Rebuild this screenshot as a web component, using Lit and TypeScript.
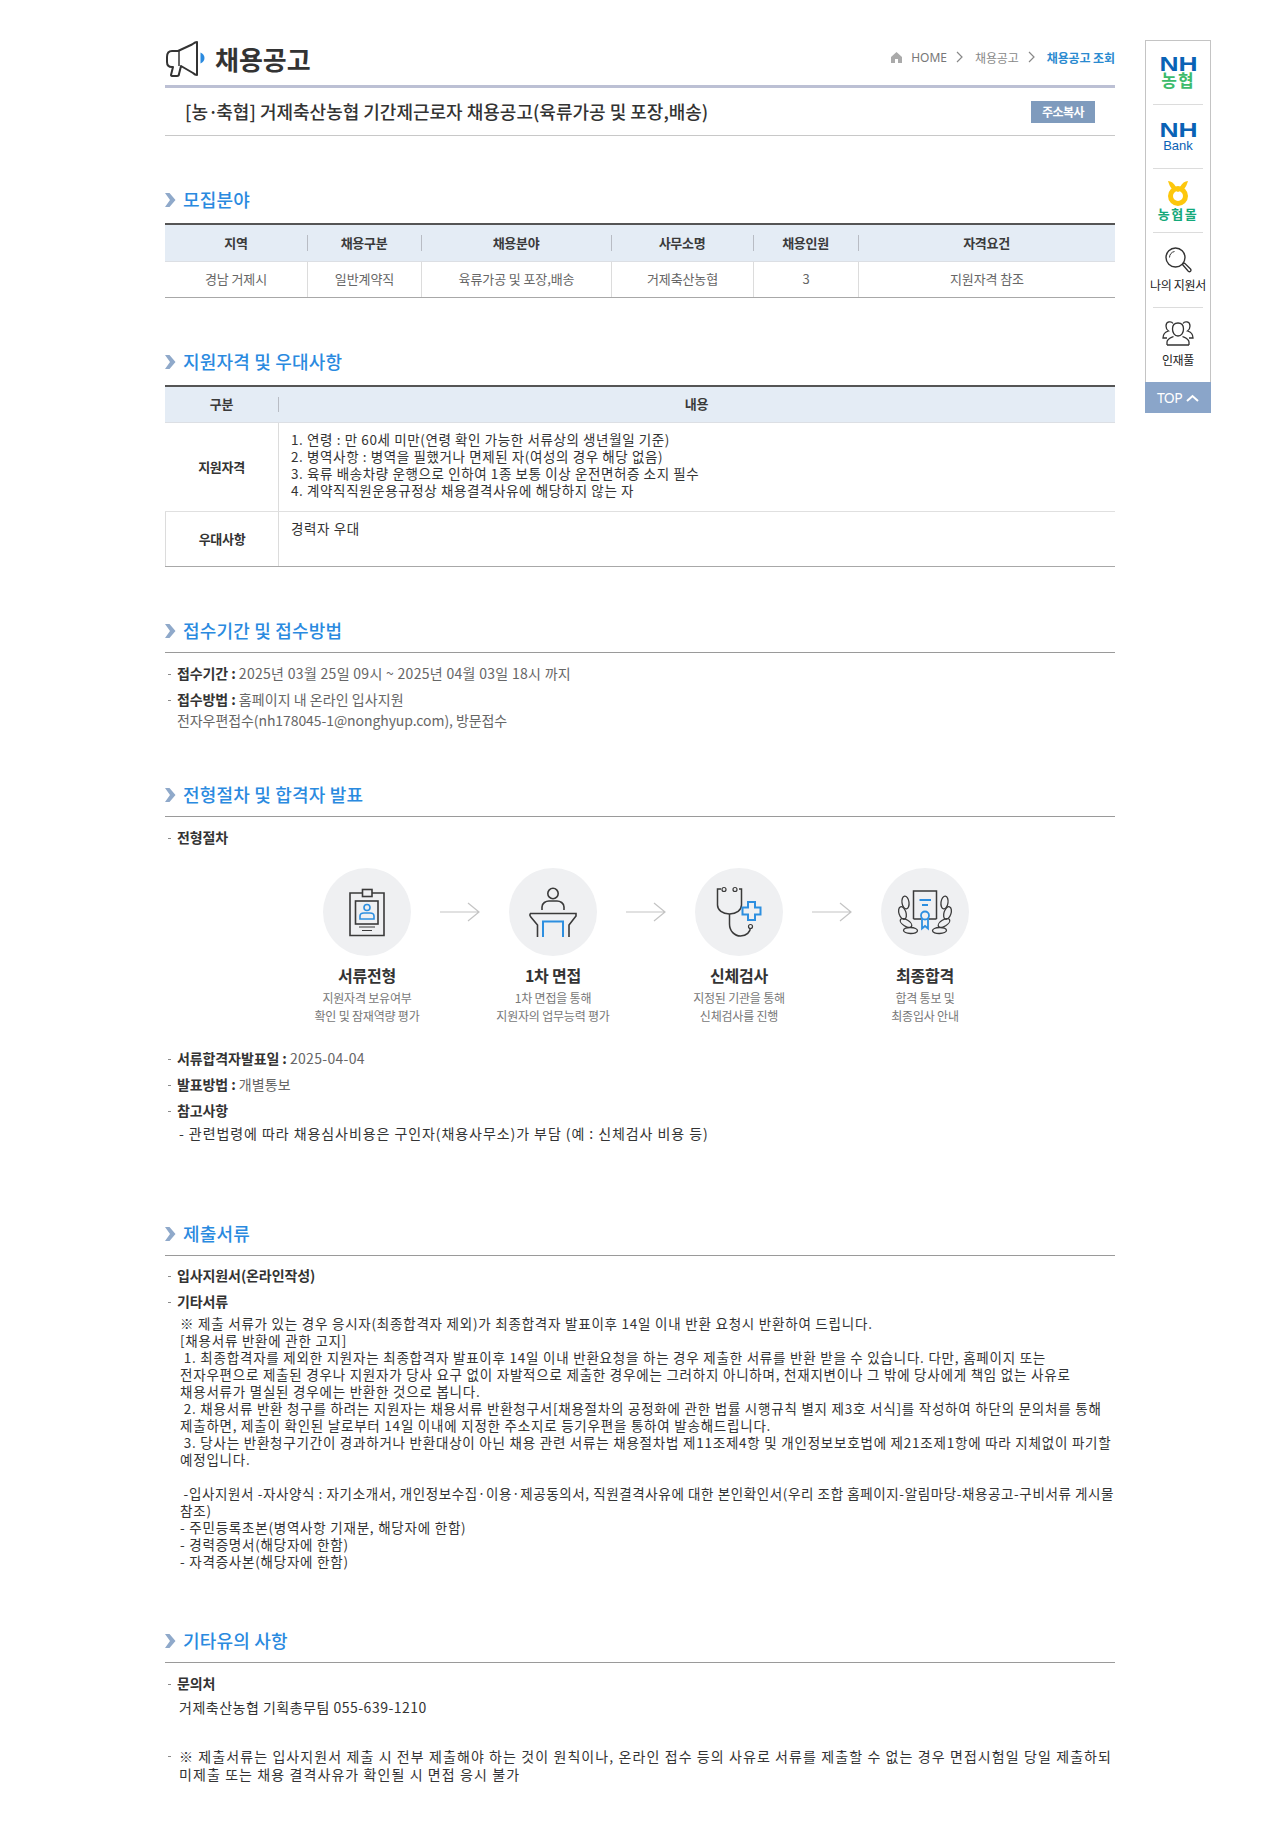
import { LitElement, html, css, svg } from "lit";
import { customElement } from "lit/decorators.js";

const chevron = html`<svg class="chev" width="11" height="14" viewBox="0 0 11 14"><polygon points="0,0 4.5,0 10.5,7 4.5,14 0,14 5,7" fill="#8fa9ca"/></svg>`;
const crumbChev = html`<svg class="cc" width="7" height="12" viewBox="0 0 7 12"><path d="M1 1l5 5-5 5" fill="none" stroke="#888" stroke-width="1.2"/></svg>`;
const D = "#3a3a3a";
const B = "#2d8fe0";

const icon1 = svg`
  <path d="M39 25H27v42.5h34V25H49" fill="none" stroke="${D}" stroke-width="1.6"/>
  <rect x="39.5" y="21.5" width="9.5" height="7" fill="none" stroke="${D}" stroke-width="1.6"/>
  <rect x="32.5" y="33" width="22.5" height="23" fill="none" stroke="${D}" stroke-width="1.6"/>
  <circle cx="44" cy="39.5" r="3" fill="none" stroke="${B}" stroke-width="1.6"/>
  <path d="M37 51v-3c0-2 2-3 4-3h6c2 0 4 1 4 3v3z" fill="none" stroke="${B}" stroke-width="1.6"/>
  <path d="M36 59h16M39 62.5h10" stroke="${D}" stroke-width="1.2"/>`;
const icon2 = svg`
  <circle cx="44" cy="25.5" r="5.2" fill="none" stroke="${D}" stroke-width="1.6"/>
  <path d="M33 42v-3c0-4 4-6 7-6h8c3 0 7 2 7 6v3" fill="none" stroke="${D}" stroke-width="1.6"/>
  <path d="M21 45.5h46v2.5L60 57v12M21 48l7.5 9v12M21 45.5v2.5M67 45.5v2.5" fill="none" stroke="${D}" stroke-width="1.6"/>
  <path d="M34 69V53.5h20V69" fill="none" stroke="${B}" stroke-width="2"/>`;
const icon3 = svg`
  <path d="M26 21h-3.500v16c0 5 5 9 12 9s12-4 12-9V21H44" fill="none" stroke="${D}" stroke-width="1.5"/>
  <circle cx="29" cy="21.500" r="2" fill="none" stroke="${D}" stroke-width="1.2"/>
  <circle cx="40" cy="21.500" r="2" fill="none" stroke="${D}" stroke-width="1.2"/>
  <path d="M34.500 46v10c0 7 5 12 11 12s10-4 10-9" fill="none" stroke="${D}" stroke-width="1.5"/>
  <circle cx="55.500" cy="58.500" r="2" fill="#eff0f2" stroke="${D}" stroke-width="1.2"/>
  <path d="M53 34h7v5.500h5.500v7H60V52h-7v-5.500h-5.500v-7H53z" fill="#eff0f2" stroke="${B}" stroke-width="2"/>`;
const leaves = svg`
  <ellipse cx="0" cy="0" rx="3.500" ry="6.500" fill="none" stroke="${D}" stroke-width="1.300" transform="translate(24.500 34.500) rotate(-8)"/>
  <ellipse cx="0" cy="0" rx="3.500" ry="6.500" fill="none" stroke="${D}" stroke-width="1.300" transform="translate(21.500 45) rotate(-18)"/>
  <ellipse cx="0" cy="0" rx="3.200" ry="6.500" fill="none" stroke="${D}" stroke-width="1.300" transform="translate(25 55) rotate(-58)"/>
  <ellipse cx="0" cy="0" rx="3" ry="7" fill="none" stroke="${D}" stroke-width="1.300" transform="translate(29.500 62.500) rotate(-88)"/>`;
const icon4 = svg`
  <path d="M32.500 51V23h23v28" fill="none" stroke="${D}" stroke-width="1.500"/><path d="M32.500 51H40M48 51h7.500" stroke="${D}" stroke-width="1.500"/>
  <path d="M38.500 32h11.500M41 37h6" stroke="${B}" stroke-width="1.800"/>
  <path d="M41 50v10.500l3-2.500 3 2.500V50" fill="#eff0f2" stroke="${B}" stroke-width="1.800"/>
  <circle cx="44" cy="47.500" r="4" fill="#eff0f2" stroke="${B}" stroke-width="1.800"/>
  ${leaves}<g transform="translate(88 0) scale(-1 1)">${leaves}</g>`;

const steps = [
  { icon: icon1, t: "서류전형", d: ["지원자격 보유여부", "확인 및 잠재역량 평가"] },
  { icon: icon2, t: "1차 면접", d: ["1차 면접을 통해", "지원자의 업무능력 평가"] },
  { icon: icon3, t: "신체검사", d: ["지정된 기관을 통해", "신체검사를 진행"] },
  { icon: icon4, t: "최종합격", d: ["합격 통보 및", "최종입사 안내"] },
];

const notice = [
  "※ 제출 서류가 있는 경우 응시자(최종합격자 제외)가 최종합격자 발표이후 14일 이내 반환 요청시 반환하여 드립니다.",
  "[채용서류 반환에 관한 고지]",
  " 1. 최종합격자를 제외한 지원자는 최종합격자 발표이후 14일 이내 반환요청을 하는 경우 제출한 서류를 반환 받을 수 있습니다. 다만, 홈페이지 또는",
  "전자우편으로 제출된 경우나 지원자가 당사 요구 없이 자발적으로 제출한 경우에는 그러하지 아니하며, 천재지변이나 그 밖에 당사에게 책임 없는 사유로",
  "채용서류가 멸실된 경우에는 반환한 것으로 봅니다.",
  " 2. 채용서류 반환 청구를 하려는 지원자는 채용서류 반환청구서[채용절차의 공정화에 관한 법률 시행규칙 별지 제3호 서식]를 작성하여 하단의 문의처를 통해",
  "제출하면, 제출이 확인된 날로부터 14일 이내에 지정한 주소지로 등기우편을 통하여 발송해드립니다.",
  " 3. 당사는 반환청구기간이 경과하거나 반환대상이 아닌 채용 관련 서류는 채용절차법 제11조제4항 및 개인정보보호법에 제21조제1항에 따라 지체없이 파기할",
  "예정입니다.",
  " ",
  " -입사지원서 -자사양식 : 자기소개서, 개인정보수집·이용·제공동의서, 직원결격사유에 대한 본인확인서(우리 조합 홈페이지-알림마당-채용공고-구비서류 게시물",
  "참조)",
  "- 주민등록초본(병역사항 기재분, 해당자에 한함)",
  "- 경력증명서(해당자에 한함)",
  "- 자격증사본(해당자에 한함)",
];

@customElement("app-root")
export class AppRoot extends LitElement {
  static styles = css`
    :host { display: block; height: 1832px; background: #fff; color: #333;
      font-family: "Noto Sans CJK KR", "Noto Sans", sans-serif; font-size: 13px; }
    * { box-sizing: border-box; }
    .page { width: 950px; margin-left: 165px; position: relative; }
    .top { height: 88px; border-bottom: 3px solid #bcc0d4; display: flex; justify-content: space-between; align-items: flex-start; }
    .brand { display: flex; align-items: center; gap: 10px; margin: 41px 0 0 1px; height: 36px; }
    .brand h1 { margin: 0; font-size: 26px; font-weight: 700; color: #333; letter-spacing: 0; line-height: 36px; }
    .crumb { display: flex; align-items: center; margin-top: 47px; height: 20px; font-size: 12px; color: #888; letter-spacing: -0.1px; }
    .crumb .home { margin-right: 9px; }
    .crumb .h { font-family: "Noto Sans", sans-serif; letter-spacing: 0; margin-right: 9px; color: #777; }
    .crumb .cc { margin-right: 12px; }
    .crumb .m { margin-right: 9px; }
    .crumb b { color: #2a8ad0; font-weight: 700; }
    .title { height: 48px; border-bottom: 1px solid #c8c8c8; display: flex; align-items: center; justify-content: space-between; padding: 0 20px 0 20px; }
    .title h2 { margin: 0; padding-bottom: 2px; font-size: 18px; font-weight: 500; letter-spacing: 0; color: #333; }
    .title .dot { letter-spacing: -2px; }
    .copy { width: 64px; height: 22px; background: #7f9bbd; color: #fff; font-size: 12px; font-weight: 700; display: flex; align-items: center; justify-content: center; letter-spacing: -0.5px; }
    section { margin-top: 52px; }
    .head { display: flex; align-items: center; gap: 7px; height: 24px; }
    .head h3 { margin: 0; padding-bottom: 2px; font-size: 18px; font-weight: 500; color: #2a8adf; letter-spacing: 0.2px; line-height: 24px; }
    .ruled { padding-bottom: 9px; height: 34px; border-bottom: 1px solid #9a9a9a; }
    .tbl { display: grid; margin-top: 11px; border-top: 2px solid #555; border-bottom: 1px solid #a8a8a8; }
    .t1 { grid-template-columns: 142px 114px 190px 142px 105px 257px; grid-template-rows: 37px 35px; }
    .t2 { grid-template-columns: 113px 837px; grid-template-rows: 36px 89px 54px; }
    .th { background: #e4ecf5; border-bottom: 1px solid #dcdfe4; padding-bottom: 2px; font-weight: 700; font-size: 13px; color: #3a3a3a; display: flex; align-items: center; justify-content: center; letter-spacing: -0.3px; position: relative; }
    .th + .th::before { content: ""; position: absolute; left: 0; top: 10px; bottom: 10px; width: 1px; background: #b8bcc4; }
    .td { display: flex; align-items: center; justify-content: center; padding-bottom: 2px; color: #666; font-size: 13px; letter-spacing: -0.1px; }
    .td + .td { border-left: 1px solid #dcdcdc; }
    .t2 .td { color: #333; }
    .rowh { font-weight: 700; letter-spacing: -0.3px; }
    .td.cell { justify-content: flex-start; align-items: flex-start; font-size: 13.500px; line-height: 17px; padding: 8px 0 0 12px; letter-spacing: 0.6px; }
    .line { border-bottom: 1px solid #e0e0e0; }
    .list { padding-top: 10px; }
    .s5 .list { padding-top: 9px; }
    .item { line-height: 21px; margin-bottom: 5px; padding-left: 12px; font-size: 14px; color: #666; letter-spacing: 0.05px;
      background: linear-gradient(#8a8a8a, #8a8a8a) no-repeat 3px 11px / 3px 1px; }
    .item b { color: #333; font-weight: 700; letter-spacing: -0.1px; }
    .num { letter-spacing: 0.3px; }
    .mail { letter-spacing: -0.08px; }
    .sub { color: #333; font-size: 14px; letter-spacing: 0.93px; margin: -3px 0 0 14px; line-height: 21px; white-space: pre; }
    .flow { display: flex; align-items: flex-start; margin: 20px 0 0 142px; }
    .step { width: 120px; display: flex; flex-direction: column; align-items: center; white-space: nowrap; }
    .circle { width: 88px; height: 88px; border-radius: 50%; background: #eff0f2; }
    .step svg { display: block; }
    .step strong { margin: 8px 0 3px; font-size: 16px; line-height: 22px; font-weight: 700; color: #333; letter-spacing: -0.2px; }
    .step span { font-size: 12px; line-height: 18px; color: #777; letter-spacing: -0.2px; }
    .arrow { margin: 34px 13px 0; flex: none; }
    .after { margin-top: 23px; }
    .notice { margin: -2px 0 0 15px; line-height: 17px; font-size: 13.500px; color: #333; letter-spacing: 0.77px; white-space: pre; }
    .notice div { min-height: 17px; }
    .notice .tight { letter-spacing: 0.6px; }
    .s5 { margin-top: 78px; }
    .s6 { margin-top: 59px; }
    .contact { margin: -3px 0 0 14px; font-size: 14px; line-height: 22px; color: #333; letter-spacing: 0.5px; }
    .warn { margin-top: 29px; padding-left: 14px; font-size: 14px; line-height: 18px; color: #333; letter-spacing: 1.09px; white-space: pre;
      background: linear-gradient(#8a8a8a, #8a8a8a) no-repeat 3px 9px / 3px 1px; }

    .quick { position: absolute; left: 980px; top: 40px; width: 66px; height: 373px; border: 1px solid #c4c4c4; border-bottom: 0; background: #fff; display: flex; flex-direction: column; align-items: center; }
    .q { width: 50px; display: flex; flex-direction: column; align-items: center; border-bottom: 1px solid #dcdcdc; flex: none; }
    .q.last { border-bottom: 0; }
    .nh { font-family: "Liberation Sans", sans-serif; font-weight: 700; color: #0a62b5; font-size: 20px; line-height: 15px; height: 15px; transform: scaleX(1.32); }
    .q1 { height: 64px; padding-top: 16px; }
    .q2 { height: 64px; padding-top: 18px; }
    .q3 { height: 64px; padding-top: 12px; }
    .q4 { height: 75px; padding-top: 13px; }
    .q5 { height: 74px; padding-top: 12px; }
    .q5 .lbl { margin-top: 5px; }
    .ko1 { font-size: 17px; line-height: 15px; font-weight: 700; color: #3dbb6c; margin-top: 0; letter-spacing: 1px; }
    .bank { font-family: "Liberation Sans", sans-serif; font-size: 13px; line-height: 15px; color: #0a62b5; margin-top: 0; }
    .mall { font-size: 13px; line-height: 14px; font-weight: 700; color: #14a97a; letter-spacing: 1.5px; margin-top: 1px; white-space: nowrap; }
    .lbl { font-size: 12px; line-height: 16px; color: #222; letter-spacing: -0.3px; white-space: nowrap; margin-top: 3px; }
    .topbtn { position: absolute; left: -1px; right: -1px; bottom: 0; height: 31px; background: #8aa5c9; color: #fff; display: flex; align-items: center; justify-content: center; gap: 4px; font-size: 14px; font-family: "Noto Sans", sans-serif; letter-spacing: -0.6px; }
  `;

  render() {
    return html`<div class="page">
      <div class="top">
        <div class="brand">
          <svg width="39" height="36" viewBox="0 0 39 36">
            <path d="M31 1C29 1 28 2 26 3.500L12 10H6C3 10 1 12 1 16v5c0 4 2 5 5 5h1l-2 8c0 1 1 1 2 1h4c1 0 2-1 2-2l2-8 12 7c1 1 3 2 4 2z" fill="none" stroke="#333" stroke-width="2" stroke-linejoin="round"/>
            <path d="M13 10v15" stroke="#333" stroke-width="1.500"/>
            <path d="M34.500 11.500c2.500 1 4 3 4 5.500s-1.500 4.500-4 5.500z" fill="#2a8adf"/>
          </svg>
          <h1>채용공고</h1>
        </div>
        <div class="crumb">
          <svg class="home" width="11" height="11" viewBox="0 0 11 11"><path d="M5.500 0L0 5v6h4V7h3v4h4V5z" fill="#aaa"/></svg>
          <span class="h">HOME</span>${crumbChev}<span class="m">채용공고</span>${crumbChev}<b>채용공고 조회</b>
        </div>
      </div>
      <div class="title"><h2>[농<span class="dot">·</span>축협] 거제축산농협 기간제근로자 채용공고(육류가공 및 포장,배송)</h2><div class="copy">주소복사</div></div>

      <section>
        <div class="head">${chevron}<h3>모집분야</h3></div>
        <div class="tbl t1">
          <div class="th">지역</div><div class="th">채용구분</div><div class="th">채용분야</div><div class="th">사무소명</div><div class="th">채용인원</div><div class="th">자격요건</div>
          <div class="td">경남 거제시</div><div class="td">일반계약직</div><div class="td">육류가공 및 포장,배송</div><div class="td">거제축산농협</div><div class="td">3</div><div class="td">지원자격 참조</div>
        </div>
      </section>

      <section>
        <div class="head">${chevron}<h3>지원자격 및 우대사항</h3></div>
        <div class="tbl t2">
          <div class="th">구분</div><div class="th">내용</div>
          <div class="td rowh line">지원자격</div>
          <div class="td cell line"><div>1. 연령 : 만 60세 미만(연령 확인 가능한 서류상의 생년월일 기준)<br>2. 병역사항 : 병역을 필했거나 면제된 자(여성의 경우 해당 없음)<br>3. 육류 배송차량 운행으로 인하여 1종 보통 이상 운전면허증 소지 필수<br>4. 계약직직원운용규정상 채용결격사유에 해당하지 않는 자</div></div>
          <div class="td rowh">우대사항</div>
          <div class="td cell">경력자 우대</div>
        </div>
      </section>

      <section>
        <div class="head ruled">${chevron}<h3>접수기간 및 접수방법</h3></div>
        <div class="list">
          <div class="item"><b>접수기간 :</b> <span class="num">2025년 03월 25일 09시 ~ 2025년 04월 03일 18시 까지</span></div>
          <div class="item"><b>접수방법 :</b> 홈페이지 내 온라인 입사지원<br><span class="mail">전자우편접수(nh178045-1@nonghyup.com), 방문접수</span></div>
        </div>
      </section>

      <section>
        <div class="head ruled">${chevron}<h3>전형절차 및 합격자 발표</h3></div>
        <div class="list">
          <div class="item"><b>전형절차</b></div>
          <div class="flow">
            ${steps.map((s, i) => html`
              <div class="step">
                <div class="circle"><svg width="88" height="88" viewBox="0 0 88 88">${s.icon}</svg></div>
                <strong>${s.t}</strong>
                <span>${s.d[0]}</span><span>${s.d[1]}</span>
              </div>
              ${i < 3 ? html`<svg class="arrow" width="40" height="20" viewBox="0 0 40 20"><path d="M0 10h39M28 1l11 9-11 9" fill="none" stroke="#c4c4c4" stroke-width="1.200"/></svg>` : ""}`)}
          </div>
          <div class="after">
            <div class="item"><b>서류합격자발표일 :</b> <span class="num">2025-04-04</span></div>
            <div class="item"><b>발표방법 :</b> 개별통보</div>
            <div class="item"><b>참고사항</b></div>
            <div class="sub">- 관련법령에 따라 채용심사비용은 구인자(채용사무소)가 부담 (예 : 신체검사 비용 등)</div>
          </div>
        </div>
      </section>

      <section class="s5">
        <div class="head ruled">${chevron}<h3>제출서류</h3></div>
        <div class="list">
          <div class="item"><b>입사지원서(온라인작성)</b></div>
          <div class="item"><b>기타서류</b></div>
          <div class="notice">${notice.map((l, i) => html`<div class=${i === 10 ? "tight" : ""}>${l}</div>`)}</div>
        </div>
      </section>

      <section class="s6">
        <div class="head ruled">${chevron}<h3>기타유의 사항</h3></div>
        <div class="list">
          <div class="item"><b>문의처</b></div>
          <div class="contact">거제축산농협 기획총무팀 055-639-1210</div>
          <div class="warn">※ 제출서류는 입사지원서 제출 시 전부 제출해야 하는 것이 원칙이나, 온라인 접수 등의 사유로 서류를 제출할 수 없는 경우 면접시험일 당일 제출하되
미제출 또는 채용 결격사유가 확인될 시 면접 응시 불가</div>
        </div>
      </section>

      <aside class="quick">
        <div class="q q1"><div class="nh">NH</div><div class="ko1">농협</div></div>
        <div class="q q2"><div class="nh">NH</div><div class="bank">Bank</div></div>
        <div class="q q3">
          <svg width="24" height="25" viewBox="0 0 24 25">
            <circle cx="12" cy="15" r="7.500" fill="none" stroke="#fdc70c" stroke-width="5"/>
            <path d="M2 0c3 0 6 2 8 6l2 2 2-2c2-4 5-6 8-6-1 3-2 6-4 8l-6 3-6-3C4 6 3 3 2 0z" fill="#fdc70c"/>
          </svg>
          <div class="mall">농협몰</div>
        </div>
        <div class="q q4">
          <svg width="28" height="28" viewBox="0 0 28 28">
            <circle cx="11.500" cy="11.500" r="9.500" fill="none" stroke="#333" stroke-width="1.400"/>
            <path d="M5.500 11.500c0-3 2-5.500 5-6" fill="none" stroke="#333" stroke-width="1"/>
            <path d="M18.500 18.500l2-1.500 6 6c.6.800.6 1.600 0 2.200s-1.500.6-2.200 0z" fill="none" stroke="#333" stroke-width="1.300"/>
          </svg>
          <div class="lbl">나의 지원서</div>
        </div>
        <div class="q q5 last">
          <svg width="32" height="27" viewBox="0 0 32 27">
            <path d="M16 3c3.500 0 5.500 2.500 5.500 6s-2 7-5.500 7-5.500-3.500-5.500-7 2-6 5.500-6zM5 25v-3c0-3 3-4 6.500-5.500M27 25v-3c0-3-3-4-6.500-5.500M5 25h22" fill="none" stroke="#333" stroke-width="1.300"/>
            <path d="M11 3.500C9.500 1 4 1 4 6c0 2 1 4 2.500 5C3 12 1 14 1 18h4M21 3.500C22.500 1 28 1 28 6c0 2-1 4-2.500 5 3.500 1 5.500 3 5.500 7h-4" fill="none" stroke="#333" stroke-width="1.300"/>
          </svg>
          <div class="lbl">인재풀</div>
        </div>
        <div class="topbtn">TOP <svg width="13" height="8" viewBox="0 0 13 8"><path d="M1 7l5.500-5L12 7" fill="none" stroke="#fff" stroke-width="2"/></svg></div>
      </aside>
    </div>`;
  }
}
